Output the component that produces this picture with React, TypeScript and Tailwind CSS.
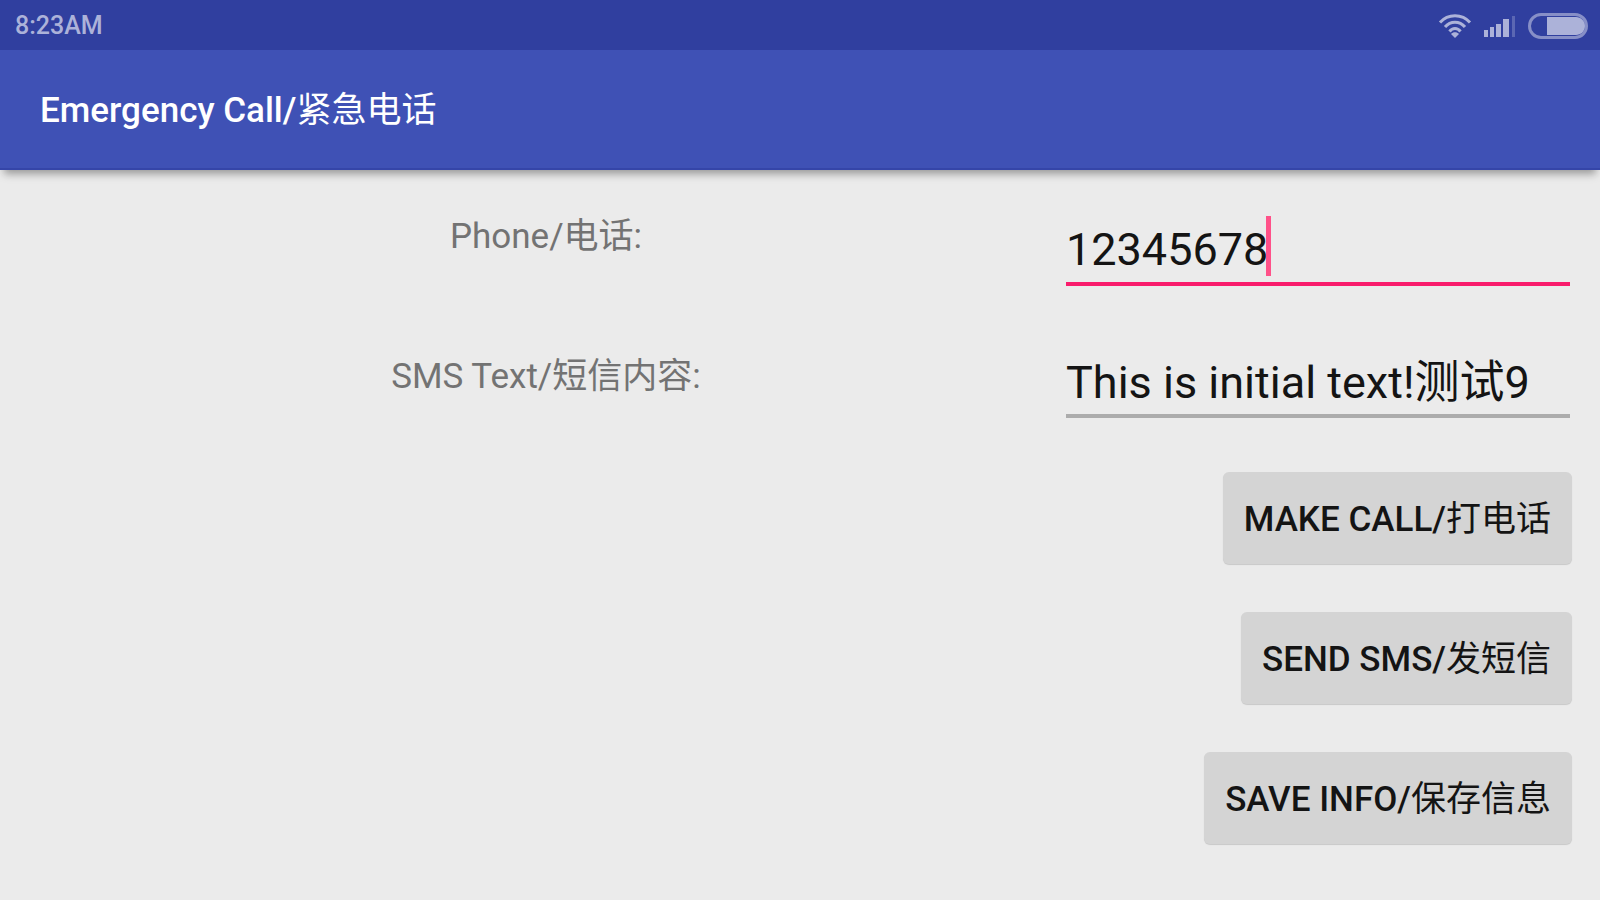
import * as React from "react"

type Field = {
	id: string
	label: string
	value: string
	type: string
}

// CJK glyphs stay at regular weight next to the medium latin text
const actions = [
	{ latin: "MAKE CALL/", cjk: "打电话" },
	{ latin: "SEND SMS/", cjk: "发短信" },
	{ latin: "SAVE INFO/", cjk: "保存信息" },
]

const fields: Field[] = [
	{ id: "phone", label: "Phone/电话:", value: "12345678", type: "tel" },
	{ id: "sms", label: "SMS Text/短信内容:", value: "This is initial text!测试9", type: "text" },
]

function WifiIcon() {
	return (
		<svg width="34" height="26" viewBox="0 0 34 26" fill="none" stroke="currentColor" strokeWidth="3" aria-hidden="true">
			<path d="M2 9.5C10 0.5 24 0.5 32 9.5" />
			<path d="M7 14C12.5 7.5 21.5 7.5 27 14" />
			<path d="M11.5 18.5C14.5 14.5 19.5 14.5 22.5 18.5" />
			<path d="M17 25L13 21C15 18.5 19 18.5 21 21Z" fill="currentColor" stroke="none" />
		</svg>
	)
}

function SignalIcon() {
	return (
		<svg width="32" height="24" viewBox="0 0 32 24" fill="currentColor" aria-hidden="true">
			<rect x="0" y="16" width="4" height="7" />
			<rect x="6" y="13" width="4" height="10" />
			<rect x="12" y="10" width="5" height="13" />
			<rect x="19" y="5" width="6" height="18" />
			<rect x="28" y="2" width="3" height="21" opacity="0.35" />
		</svg>
	)
}

function BatteryIcon() {
	return (
		<svg width="60" height="26" viewBox="0 0 60 26" fill="none" aria-hidden="true">
			<rect x="1.5" y="1.5" width="57" height="23" rx="11.5" stroke="currentColor" strokeWidth="3" opacity="0.7" />
			<path d="M19 4H48C53 4 57 8 57 13C57 18 53 22 48 22H19Z" fill="currentColor" />
		</svg>
	)
}

function StatusBar() {
	return (
		<div className="flex h-[50px] items-center justify-between bg-[#303f9f] pt-0.5 pr-3 pl-[15px] text-[#acb2d9]">
			<span className="text-[25px] leading-[30px] font-medium">8:23AM</span>
			<div className="flex items-center gap-3">
				<WifiIcon />
				<SignalIcon />
				<BatteryIcon />
			</div>
		</div>
	)
}

function FieldInput({ id, value, type, focused }: Field & { focused: boolean }) {
	return (
		<div className="relative">
			<input
				id={id}
				type={type}
				defaultValue={value}
				className={
					focused
						? "block h-[70px] w-full border-b-4 border-[#f91c6c] text-[45px] leading-[60px] text-[#141414] outline-none"
						: "block h-[68px] w-full border-b-4 border-[#acacac] pb-2 text-[45px] leading-[56px] text-[#141414] outline-none"
				}
			/>
			{/* Text caret */}
			{focused && <span className="absolute top-0 left-[200px] h-[60px] w-[5px] bg-[#ff5189]" />}
		</div>
	)
}

export default function App() {
	return (
		<div className="min-h-screen bg-[#ebebeb] font-['Roboto','Noto_Sans_CJK_SC',sans-serif]">
			{/* ===== Header ===== */}
			<header className="shadow-[0_8px_8px_-4px_rgba(0,0,0,0.35)]">
				<StatusBar />
				<div className="flex h-[120px] items-center border-b-2 border-[#3545a8] bg-[#3f51b5] px-10 pt-1">
					<h1 className="text-[35px] leading-[48px] font-medium text-white">
						Emergency Call/<span className="font-normal">紧急电话</span>
					</h1>
				</div>
			</header>

			{/* ===== Form ===== */}
			<form className="pt-[46px]" onSubmit={(e) => e.preventDefault()}>
				<div className="flex items-start pr-[30px] pl-[26px]">
					<div className="flex flex-1 flex-col gap-[98px] text-center text-[35px] leading-[42px] text-[#737373]">
						{fields.map((field) => (
							<label key={field.id} htmlFor={field.id}>
								{field.label}
							</label>
						))}
					</div>
					<div className="flex w-[504px] flex-col gap-16">
						{fields.map((field, i) => (
							<FieldInput key={field.id} {...field} focused={i === 0} />
						))}
					</div>
				</div>

				<div className="mt-[54px] flex flex-col items-end gap-12 pr-[28px]">
					{actions.map((action) => (
						<button
							key={action.latin}
							type="button"
							className="h-[92px] rounded-md bg-[#d4d4d4] px-[21px] pt-1 text-[35px] leading-[48px] font-medium text-[#141414] shadow-[0_1px_1px_rgba(0,0,0,0.15)]"
						>
							{action.latin}
							<span className="font-normal">{action.cjk}</span>
						</button>
					))}
				</div>
			</form>
		</div>
	)
}
